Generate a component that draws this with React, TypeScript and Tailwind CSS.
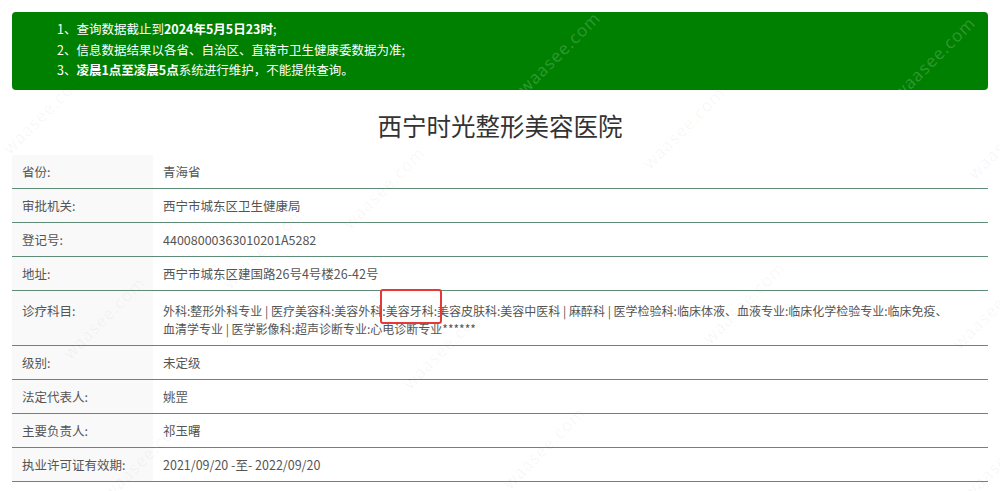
import React from "react";

const rows: { label: string; value: React.ReactNode; tall?: boolean }[] = [
  { label: "省份:", value: "青海省" },
  { label: "审批机关:", value: "西宁市城东区卫生健康局" },
  { label: "登记号:", value: "44008000363010201A5282" },
  { label: "地址:", value: "西宁市城东区建国路26号4号楼26-42号" },
  {
    label: "诊疗科目:",
    tall: true,
    value: (
      <div className="text-[12px]">
        <div className="whitespace-nowrap">
          外科:整形外科专业 | 医疗美容科:美容外科:
          <span className="relative">
            美容牙科
            <span className="absolute left-[-6px] right-[-8px] top-[-13px] bottom-[-5px] border-2 border-[#e53935] rounded-[3px]" />
          </span>
          :美容皮肤科:美容中医科 | 麻醉科 | 医学检验科:临床体液、血液专业:临床化学检验专业:临床免疫、
        </div>
        <div>血清学专业 | 医学影像科:超声诊断专业:心电诊断专业******</div>
      </div>
    ),
  },
  { label: "级别:", value: "未定级" },
  { label: "法定代表人:", value: "姚罡" },
  { label: "主要负责人:", value: "祁玉曙" },
  { label: "执业许可证有效期:", value: "2021/09/20 -至- 2022/09/20" },
];

const marks: { x: number; y: number; light?: boolean }[] = [
  { x: -10, y: 100 },
  { x: 505, y: 40, light: true },
  { x: 880, y: 45, light: true },
  { x: 330, y: 175 },
  { x: 630, y: 115 },
  { x: 955, y: 125 },
  { x: 210, y: 235 },
  { x: 690, y: 290 },
  { x: 940, y: 295 },
  { x: 50, y: 305 },
  { x: 390, y: 335 },
  { x: 90, y: 445 },
  { x: 490, y: 435 },
  { x: 950, y: 445 },
];

export default function App() {
  return (
    <div
      className="relative w-[1000px] h-[491px] overflow-hidden bg-white text-[12.5px] text-[#333]"
      style={{ fontFamily: '"Microsoft YaHei", "Noto Sans CJK SC", "Open Sans", sans-serif' }}
    >
      <div className="mx-[12px] mt-[12px] rounded-[4px] bg-[#008000] pl-[45px] pt-[7px] pb-[9px] text-white leading-[20.5px]">
        <div>
          1、查询数据截止到<b>2024年5月5日23时</b>;
        </div>
        <div>2、信息数据结果以各省、自治区、直辖市卫生健康委数据为准;</div>
        <div>
          3、<b>凌晨1点至凌晨5点</b>系统进行维护，不能提供查询。
        </div>
      </div>

      <h1 className="mt-[20px] text-center text-[24.5px] leading-[32px] text-[#333]">西宁时光整形美容医院</h1>

      <div className="mx-[12px] mt-[13px]">
        {rows.map((r, i) => (
          <div key={i} className="flex border-b border-[#5f8c77]">
            <div
              className={`w-[141px] shrink-0 bg-[#f9f9f9] pl-[10px] leading-[18px] text-[#555] ${
                r.tall ? "pt-[11px] pb-[7px]" : "pt-[8px] pb-[7px]"
              }`}
            >
              {r.label}
            </div>
            <div
              className={`flex-1 pl-[10px] pr-[12px] leading-[18px] text-[#555] ${
                r.tall ? "pt-[11px] pb-[7px]" : "pt-[8px] pb-[7px]"
              }`}
            >
              {r.value}
            </div>
          </div>
        ))}
      </div>

      {marks.map((m, i) => (
        <div
          key={i}
          className={`pointer-events-none absolute -rotate-45 text-[17px] tracking-[1px] ${
            m.light ? "text-white/20" : "text-black/[0.045]"
          }`}
          style={{ left: m.x, top: m.y, fontFamily: '"Open Sans", sans-serif' }}
        >
          waasee.com
        </div>
      ))}
    </div>
  );
}
